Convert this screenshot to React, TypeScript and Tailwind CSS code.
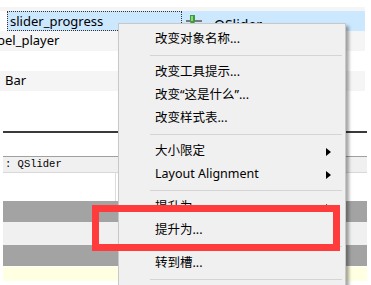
import React from 'react'

const font = { fontFamily: '"Noto Sans", "Noto Sans CJK SC", sans-serif' }

function SliderIcon() {
  return (
    <svg width="16" height="14" viewBox="0 0 16 14" className="flex-shrink-0">
      <rect x="0" y="6" width="16" height="2" fill="#7a7a7a" />
      <path d="M4 1 H9 V8 L6.5 11 L4 8 Z" fill="#3f9a3a" />
      <rect x="5" y="2" width="2" height="5" fill="#8bd67e" />
    </svg>
  )
}

function Arrow() {
  return (
    <svg width="5" height="8" viewBox="0 0 5 8" className="ml-auto">
      <path d="M0 0 L5 4 L0 8 Z" fill="#000" />
    </svg>
  )
}

function Item({ label, sub }: { label: string; sub?: boolean }) {
  return (
    <div className="h-[23px] flex items-center pl-[36px] pr-[14px] text-[12.5px] text-black whitespace-nowrap">
      <span>{label}</span>
      {sub && <Arrow />}
    </div>
  )
}

function Separator() {
  return (
    <div className="h-[10px] pt-[4px] pl-[31px] pr-[3px]">
      <div className="h-px bg-[#d4d4d4]" />
    </div>
  )
}

export default function App() {
  return (
    <div className="relative w-[371px] h-[285px] overflow-hidden bg-white text-black" style={font}>
      {/* Object inspector tree */}
      <div className="h-[7px]" />
      <div className="h-[4px] w-[365px] bg-[#f5f5f5]" />
      <div className="h-[20px] flex pl-[7px] w-[365px]">
        <div className="flex-1 flex bg-[#cce8ff]">
          <div className="w-[175px] border border-dotted border-[#333] flex items-center pl-[2px] text-[13px] leading-none">
            slider_progress
          </div>
          <div className="flex items-center pl-[4px] gap-[12px] text-[14px] leading-none">
            <SliderIcon />
            <span className="mt-[7px]">QSlider</span>
          </div>
        </div>
      </div>
      <div className="h-[20px] w-[365px] bg-[#f5f5f5] flex items-center overflow-hidden text-[13px]">
        <span className="-ml-[3px]">bel_player</span>
      </div>
      <div className="h-[20px] w-[365px]" />
      <div className="h-[20px] w-[365px] bg-[#f5f5f5] flex items-center pl-[5px] text-[13px]">
        Bar
      </div>
      <div className="h-[40px]" />

      {/* Property editor */}
      <div className="pl-[3px] pr-[4px]">
        <div className="h-[2px] bg-[#3a3a3a]" />
        <div className="h-[23px]" />
        <div className="h-px bg-[#a0a0a0]" />
        <div
          className="h-[16px] bg-[#f0f0f0] border-b border-[#d8d8d8] flex items-center pl-[2px] text-[10.5px] leading-none"
          style={{ fontFamily: '"Liberation Mono", monospace' }}
        >
          : QSlider
        </div>
        <div className="h-[28px] flex">
          <div className="w-[113px] border-r border-[#dcdcdc]" />
        </div>
        <div className="h-[21px] bg-[#a3a3a3]" />
        <div className="h-[23px] bg-[#f0f0f0]" />
        <div className="h-[21px] bg-[#a3a3a3]" />
        <div className="h-px" />
        <div className="h-[14px] bg-[#ffffe1]" />
      </div>

      {/* Context menu */}
      <div className="absolute left-[118px] top-[23px] w-[228px] bg-[#f0f0f0] border border-[#c8c8c8] pt-[4px] shadow-[3px_3px_3px_rgba(0,0,0,0.35)]">
        <Item label="改变对象名称..." />
        <Separator />
        <Item label="改变工具提示..." />
        <Item label="改变“这是什么”..." />
        <Item label="改变样式表..." />
        <Separator />
        <Item label="大小限定" sub />
        <Item label="Layout Alignment" sub />
        <Separator />
        <Item label="提升为" sub />
        <Item label="提升为..." />
        <Separator />
        <Item label="转到槽..." />
        <Separator />
      </div>

      {/* Annotation */}
      <div className="absolute left-[92px] top-[205px] w-[248px] h-[46px] border-[7px] border-[#ff3b3b]" />
    </div>
  )
}
